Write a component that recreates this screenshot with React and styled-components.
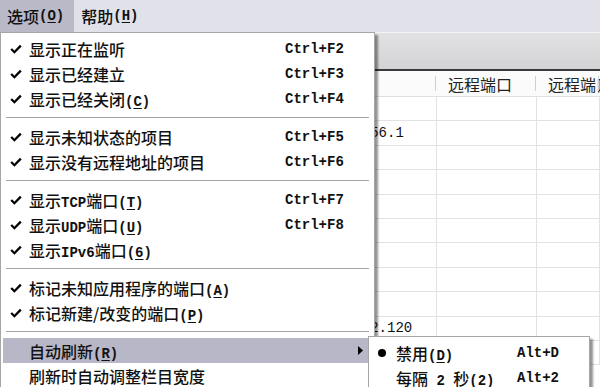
import React from 'react';
import styled, { createGlobalStyle } from 'styled-components';

const cjk = `"Noto Sans CJK SC", "Noto Sans", sans-serif`;
const mono = `"Liberation Mono", "Noto Sans CJK SC", monospace`;
const columns = '140px 157px 140px 100px 1fr';

const GlobalStyle = createGlobalStyle`
  html, body {
    margin: 0;
    padding: 0;
    background: #fff;
  }
  body {
    overflow: hidden;
  }
`;

const Window = styled.div`
  position: relative;
  width: 600px;
  height: 387px;
  overflow: hidden;
  font-family: ${cjk};
  font-size: 16px;
  font-weight: 500;
  color: #111;
  background: #fff;
`;

const MenuBar = styled.div`
  display: flex;
  height: 32px;
  background: #e1e1ea;
`;

const BarItem = styled.div`
  display: flex;
  align-items: center;
  padding: 0 10px 0 7px;
  background: ${p => (p.$open ? '#b9b9c8' : 'transparent')};
`;

const Toolbar = styled.div`
  height: 39px;
  box-sizing: border-box;
  background: linear-gradient(#e2e2e4, #d3d3d5);
  border-top: 1px solid #f3f3f5;
  border-bottom: 2px solid #3a3a3a;
`;

const HeaderRow = styled.div`
  display: grid;
  grid-template-columns: ${columns};
  height: 26px;
  box-sizing: border-box;
  background: #fbfbfb;
  border-bottom: 1px solid #e0e0e0;
`;

const HeaderCell = styled.div`
  position: relative;
  display: flex;
  align-items: center;
  padding-left: 11px;
  white-space: nowrap;
  overflow: hidden;
  font-weight: 400;
  color: #222;

  &::after {
    content: '';
    position: absolute;
    right: 1px;
    top: 5px;
    bottom: 5px;
    width: 1px;
    background: #cfcfcf;
  }
`;

const Row = styled.div`
  display: grid;
  grid-template-columns: ${columns};
  height: 24.4px;
  box-sizing: border-box;
  border-bottom: 1px solid #e2e2e2;
`;

const Cell = styled.div`
  display: flex;
  align-items: center;
  padding-left: 6px;
  border-right: 1px solid #e2e2e2;
  white-space: nowrap;
  overflow: hidden;
  font-family: ${mono};
  font-size: 14px;
  font-weight: 400;
`;

const Dropdown = styled.div`
  position: absolute;
  top: 32px;
  left: 0;
  width: 375px;
  box-sizing: border-box;
  padding: 3px 2px;
  background: #fff;
  border: 1px solid #a6a6a6;
  box-shadow: 3px 3px 2px rgba(0, 0, 0, 0.42);
`;

const Item = styled.div`
  display: grid;
  grid-template-columns: 26px 256px 1fr;
  align-items: center;
  height: 25px;
  white-space: nowrap;
  background: ${p => (p.$hot ? '#b7b7c7' : 'transparent')};
`;

const Mark = styled.div`
  display: flex;
  align-items: center;
  padding-left: 7px;
`;

const Shortcut = styled.span`
  font-family: ${mono};
  font-size: 14px;
  font-weight: 700;
`;

const Arrow = styled.svg`
  justify-self: end;
  margin-right: 9px;
`;

const Separator = styled.div`
  display: flex;
  align-items: center;
  height: 13px;
  padding: 0 3px;
`;

const SepLine = styled.div`
  flex: 1;
  height: 1px;
  background: #a4a4a4;
  border-bottom: 1px solid #fff;
`;

const Submenu = styled.div`
  position: absolute;
  top: 336px;
  left: 368px;
  width: 222px;
  box-sizing: border-box;
  padding: 3px 2px;
  background: #fff;
  border: 1px solid #a6a6a6;
  box-shadow: 3px 3px 2px rgba(0, 0, 0, 0.42);
`;

const SubItem = styled.div`
  display: grid;
  grid-template-columns: 25px 121px 1fr;
  align-items: center;
  height: 25px;
  white-space: nowrap;
`;

const Bullet = styled.span`
  width: 8px;
  height: 8px;
  margin-left: 7px;
  border-radius: 50%;
  background: #000;
`;

const Lat = styled.span`
  font-family: ${mono};
  font-size: 14px;
  font-weight: 700;

  u {
    text-underline-offset: 2px;
  }
`;

const Key = ({ k }) => (
  <Lat>
    (<u>{k}</u>)
  </Lat>
);

const Check = () => (
  <svg width="12" height="10" viewBox="0 0 12 10">
    <path d="M1.2 5 L4.4 8.2 L10.8 1.6" fill="none" stroke="#000" strokeWidth="2.3" />
  </svg>
);

const menu = [
  { check: true, label: <>显示正在监听</>, sc: 'Ctrl+F2' },
  { check: true, label: <>显示已经建立</>, sc: 'Ctrl+F3' },
  { check: true, label: <>显示已经关闭<Key k="C" /></>, sc: 'Ctrl+F4' },
  { sep: true },
  { check: true, label: <>显示未知状态的项目</>, sc: 'Ctrl+F5' },
  { check: true, label: <>显示没有远程地址的项目</>, sc: 'Ctrl+F6' },
  { sep: true },
  { check: true, label: <>显示<Lat>TCP</Lat>端口<Key k="T" /></>, sc: 'Ctrl+F7' },
  { check: true, label: <>显示<Lat>UDP</Lat>端口<Key k="U" /></>, sc: 'Ctrl+F8' },
  { check: true, label: <>显示<Lat>IPv6</Lat>端口<Key k="6" /></> },
  { sep: true },
  { check: true, label: <>标记未知应用程序的端口<Key k="A" /></> },
  { check: true, label: <>标记新建/改变的端口<Key k="P" /></> },
  { sep: true },
  { label: <>自动刷新<Key k="R" /></>, sub: true, hot: true },
  { label: <>刷新时自动调整栏目宽度</> },
];

// columns hidden under the open menu keep empty headers
const headers = ['', '', '', '远程端口', '远程端口名称'];
const rows = ['', '192.168.56.1', '', '', '', '', '', '', '', '192.168.2.120', ''];

export default function App() {
  return (
    <>
      <GlobalStyle />
      <Window>
        <MenuBar>
          <BarItem $open>
            选项<Key k="O" />
          </BarItem>
          <BarItem>
            帮助<Key k="H" />
          </BarItem>
        </MenuBar>
        <Toolbar />
        <HeaderRow>
          {headers.map((h, i) => (
            <HeaderCell key={i}>{h}</HeaderCell>
          ))}
        </HeaderRow>
        {rows.map((ip, i) => (
          <Row key={i}>
            <Cell />
            <Cell />
            <Cell>{ip}</Cell>
            <Cell />
            <Cell />
          </Row>
        ))}

        <Dropdown>
          {menu.map((m, i) =>
            m.sep ? (
              <Separator key={i}>
                <SepLine />
              </Separator>
            ) : (
              <Item key={i} $hot={m.hot}>
                <Mark>{m.check && <Check />}</Mark>
                <span>{m.label}</span>
                {m.sc && <Shortcut>{m.sc}</Shortcut>}
                {m.sub && (
                  <Arrow width="5" height="9" viewBox="0 0 5 9">
                    <polygon points="0,0 5,4.5 0,9" fill="#000" />
                  </Arrow>
                )}
              </Item>
            )
          )}
        </Dropdown>

        <Submenu>
          <SubItem>
            <Bullet />
            <span>
              禁用<Key k="D" />
            </span>
            <Shortcut>Alt+D</Shortcut>
          </SubItem>
          <SubItem>
            <span />
            <span>
              每隔<Lat> 2 </Lat>秒<Key k="2" />
            </span>
            <Shortcut>Alt+2</Shortcut>
          </SubItem>
        </Submenu>
      </Window>
    </>
  );
}
